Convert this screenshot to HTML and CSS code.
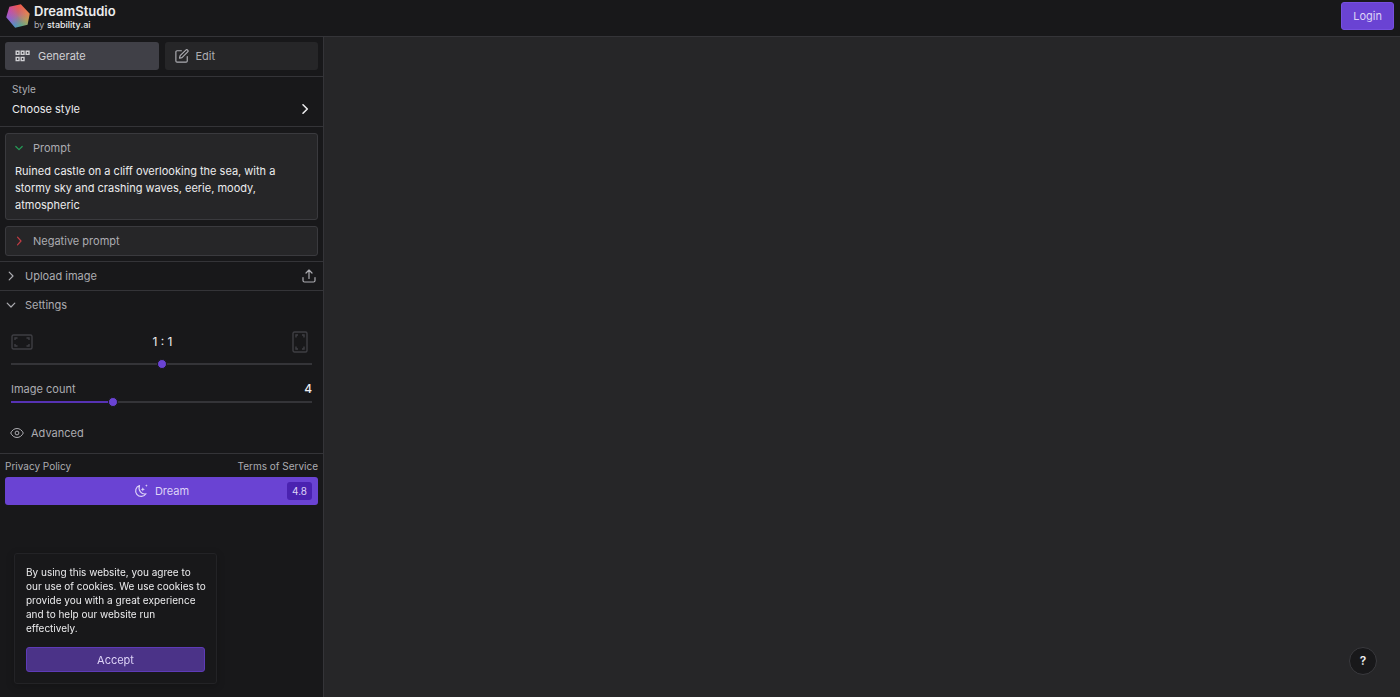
FILE: index.html
```html
<!DOCTYPE html>
<html lang="en">
	<head>
		<meta charset="utf-8">
		<meta name="viewport" content="width=device-width, initial-scale=1">
		<title>DreamStudio</title>
		<link rel="stylesheet" href="styles.css">
	</head>

	<body>
		<header class="topbar">
			<a class="brand" href="#">
				<span class="logo"></span>
				<span class="brand-text">
					<span class="brand-name">DreamStudio</span>
					<span class="brand-by">by <b>stability.ai</b></span>
				</span>
			</a>
			<button class="login" type="button">Login</button>
		</header>

		<div class="workspace">
			<aside class="sidebar">
				<nav class="tabs">
					<button class="tab active" type="button">
						<svg width="16" height="12" viewBox="0 0 16 12" fill="none" stroke="currentColor" stroke-width="1.4">
							<path d="M1.2 1.2h2.800v3.200H1.2zM6.2 1.2h2.800v3.200H6.2zM11.2 1.2h2.800v3.200h-2.800zM1.2 7.400h2.800v3.200H1.2zM6.2 7.400h2.800v3.200H6.2z"/>
						</svg>
						Generate
					</button>
					<button class="tab" type="button">
						<svg width="14" height="14" viewBox="0 0 24 24" fill="none" stroke="currentColor" stroke-width="2" stroke-linecap="round" stroke-linejoin="round">
							<path d="M11 3H3.5A2 2 0 0 0 1.500 5v15.500a2 2 0 0 0 2 2H19a2 2 0 0 0 2-2V13"/>
							<path d="M18.500 1.800a2.200 2.200 0 0 1 3.200 3.200L12 14.700l-4.300 1.100 1.100-4.300z"/>
						</svg>
						Edit
					</button>
				</nav>

				<button class="style-picker" type="button">
					<span class="style-label">Style</span>
					<span class="style-value">
						Choose style
						<svg width="12" height="12" viewBox="0 0 12 12" fill="none" stroke="currentColor" stroke-width="1.600" stroke-linecap="round" stroke-linejoin="round">
							<path d="M4 1.800 8.300 6 4 10.200"/>
						</svg>
					</span>
				</button>

				<section class="prompts">
					<div class="box">
						<label class="box-head" for="prompt">
							<svg class="green" width="10" height="10" viewBox="0 0 10 10" fill="none" stroke="currentColor" stroke-width="1.200" stroke-linecap="round" stroke-linejoin="round">
								<path d="M1.800 3.500 5 6.700l3.200-3.200"/>
							</svg>
							Prompt
						</label>
						<textarea id="prompt" rows="3" spellcheck="false">Ruined castle on a cliff overlooking the sea, with a stormy sky and crashing waves, eerie, moody, atmospheric</textarea>
					</div>
					<button class="box box-head negative" type="button">
						<svg class="red" width="10" height="10" viewBox="0 0 10 10" fill="none" stroke="currentColor" stroke-width="1.200" stroke-linecap="round" stroke-linejoin="round">
							<path d="M3.500 1.200 7 5 3.500 8.800"/>
						</svg>
						Negative prompt
					</button>
				</section>

				<div class="row">
					<button class="row-head" type="button">
						<svg width="10" height="10" viewBox="0 0 10 10" fill="none" stroke="currentColor" stroke-width="1.200" stroke-linecap="round" stroke-linejoin="round">
							<path d="M3.200 1.200 7 5 3.200 8.800"/>
						</svg>
						Upload image
					</button>
					<button type="button" aria-label="Upload">
						<svg width="14" height="14" viewBox="0 0 14 14" fill="none" stroke="currentColor" stroke-width="1.200" stroke-linecap="round" stroke-linejoin="round">
							<path d="M1 8.500v3a1.500 1.500 0 0 0 1.500 1.500h9a1.500 1.500 0 0 0 1.500-1.500v-3M7 9.500V1M4 4l3-3 3 3"/>
						</svg>
					</button>
				</div>

				<section class="settings">
					<button class="row-head" type="button">
						<svg width="10" height="10" viewBox="0 0 10 10" fill="none" stroke="currentColor" stroke-width="1.200" stroke-linecap="round" stroke-linejoin="round">
							<path d="M1.200 3.200 5 7l3.800-3.800"/>
						</svg>
						Settings
					</button>

					<div class="ratio">
						<div class="ratio-head">
							<svg width="22" height="16" viewBox="0 0 22 16" fill="none" stroke="currentColor" stroke-width="1.400">
								<rect x="1" y="1" width="20" height="14" rx="1.500"/>
								<path d="M4 6V4h2.500M15.500 4H18v2M18 10v2h-2.500M6.500 12H4v-2"/>
							</svg>
							<label for="ratio">1 : 1</label>
							<svg width="16" height="22" viewBox="0 0 16 22" fill="none" stroke="currentColor" stroke-width="1.400">
								<rect x="1" y="1" width="14" height="20" rx="1.500"/>
								<path d="M4 6.500V4h2M10 4h2v2.500M12 15.500V18h-2M6 18H4v-2.500"/>
							</svg>
						</div>
						<input id="ratio" type="range" min="0" max="10" value="5">
					</div>

					<div class="count">
						<div class="count-head">
							<label for="count">Image count</label>
							<output for="count">4</output>
						</div>
						<input id="count" class="filled" type="range" min="1" max="10" value="4">
					</div>

					<button class="advanced" type="button">
						<svg width="14" height="12" viewBox="0 0 14 12" fill="none" stroke="currentColor">
							<path d="M.7 6C2 3.300 4.200 1.500 7 1.500S12 3.300 13.300 6C12 8.700 9.800 10.500 7 10.500S2 8.700.7 6z"/>
							<circle cx="7" cy="6" r="1.900"/>
						</svg>
						Advanced
					</button>
				</section>

				<section class="submit">
					<div class="legal">
						<a href="#">Privacy Policy</a>
						<a href="#">Terms of Service</a>
					</div>
					<button class="dream" type="button">
						<span class="dream-label">
							<svg width="14" height="14" viewBox="0 0 14 14" fill="none" stroke="currentColor" stroke-width="1.200" stroke-linejoin="round">
								<path d="M5.500 1.500a5.600 5.600 0 1 0 6.500 8.300C7.500 11 3.800 6 5.500 1.500z"/>
								<path fill="currentColor" stroke="none" d="m8.800 3.200.6 1.500 1.500.6-1.500.6-.6 1.500-.6-1.500-1.500-.6 1.500-.6zM12.400.300l.4 1 1 .4-1 .4-.4 1-.4-1-1-.4 1-.4z"/>
							</svg>
							Dream
						</span>
						<span class="cost">4.8</span>
					</button>
				</section>
			</aside>

			<main class="canvas"></main>
		</div>

		<div class="cookies">
			<p>
				By using this website, you agree to<br>
				our use of cookies. We use cookies to<br>
				provide you with a great experience<br>
				and to help our website run<br>
				effectively.
			</p>
			<button type="button">Accept</button>
		</div>

		<button class="help" type="button">?</button>
	</body>
</html>
```
FILE: styles.css
```css
:root {
	--bg: #18181a;
	--panel: #262628;
	--line: #343438;
	--active: #404047;
	--text: #ececee;
	--muted: #acacb1;
	--purple: #6a43d3;
	--purple-dark: #4a22b0;
}

* {
	box-sizing: border-box;
}

body {
	margin: 0;
	min-height: 100vh;
	display: flex;
	flex-direction: column;
	background-color: var(--bg);
	color: var(--text);
	font-family: Inter, sans-serif;
	font-size: 11px;
	line-height: 16px;
}

button {
	display: flex;
	align-items: center;
	margin: 0;
	padding: 0;
	border: none;
	background: none;
	color: var(--muted);
	font: inherit;
	text-align: left;
	cursor: pointer;
}

svg {
	flex: none;
}

a {
	color: inherit;
	text-decoration: none;
}

/* header */
.topbar {
	display: flex;
	align-items: center;
	justify-content: space-between;
	height: 37px;
	padding: 0 6px 4px;
	border-bottom: 1px solid var(--line);
}

.brand {
	display: flex;
	align-items: center;
	gap: 4px;
}

.logo {
	width: 24px;
	height: 24px;
	background:
		radial-gradient(circle, rgba(176, 112, 138, 0.9), rgba(176, 112, 138, 0) 60%),
		conic-gradient(#f0564c, #e87f50 70deg, #b5a05a 115deg, #62a88a 160deg, #5590c4 200deg, #8b62d8 250deg, #c14fae 300deg, #f0564c);
	clip-path: polygon(14% 11%, 62% 1%, 99% 41%, 90% 86%, 38% 99%, 1% 55%);
}

.brand-text {
	display: flex;
	flex-direction: column;
	padding-top: 2px;
}

.brand-name {
	font-size: 13px;
	font-weight: 600;
	line-height: 15px;
}

.brand-by {
	color: var(--muted);
	font-size: 9px;
	line-height: 12px;
}

.brand-by b {
	color: var(--text);
	font-weight: 500;
}

.login {
	height: 28px;
	padding: 0 11px;
	border: 1px solid #7650de;
	border-radius: 3px;
	background-color: var(--purple);
	color: #ddd3f7;
}

/* layout */
.workspace {
	flex: 1;
	display: flex;
}

.sidebar {
	flex: none;
	width: 324px;
	border-right: 1px solid var(--line);
}

.canvas {
	flex: 1;
	background-color: var(--panel);
}

.tabs {
	display: flex;
	gap: 6px;
	padding: 5px 5px 6px;
	border-bottom: 1px solid var(--line);
}

.tab {
	flex: 1;
	gap: 7px;
	height: 28px;
	padding: 0 10px;
	border-radius: 3px;
	background-color: var(--panel);
}

.tab.active {
	background-color: var(--active);
	color: #d0d0d4;
}

.style-picker {
	flex-direction: column;
	align-items: stretch;
	gap: 5px;
	width: 100%;
	height: 50px;
	padding: 5px 12px 0;
	border-bottom: 1px solid var(--line);
	color: var(--text);
}

.style-label {
	color: var(--muted);
	font-size: 10px;
	line-height: 14px;
}

.style-value {
	display: flex;
	align-items: center;
	justify-content: space-between;
}

.prompts {
	display: flex;
	flex-direction: column;
	gap: 6px;
	padding: 6px 5px 5px;
	border-bottom: 1px solid var(--line);
}

.box {
	border: 1px solid #3a3a3e;
	border-radius: 3px;
	background-color: var(--panel);
}

.box-head {
	display: flex;
	align-items: center;
	gap: 9px;
	height: 28px;
	padding: 0 8px;
	color: var(--muted);
}

.box textarea {
	display: block;
	width: 100%;
	padding: 1px 24px 5px 9px;
	border: none;
	outline: none;
	resize: none;
	background: none;
	color: var(--text);
	font: inherit;
	line-height: 17px;
	overflow: hidden;
}

.negative {
	height: 30px;
}

.green {
	color: #259c58;
}

.red {
	color: #c03c44;
}

.row {
	display: flex;
	align-items: center;
	justify-content: space-between;
	padding-right: 7px;
	border-bottom: 1px solid var(--line);
}

.row-head {
	gap: 9px;
	height: 28px;
	padding-left: 6px;
}

/* settings */
.settings {
	border-bottom: 1px solid var(--line);
}

.ratio {
	padding: 12px 11px 0;
}

.ratio-head {
	display: flex;
	align-items: center;
	justify-content: space-between;
	height: 22px;
	padding-right: 4px;
	color: #3e3e43;
}

.ratio-head label {
	color: var(--text);
	font-size: 12px;
}

.count {
	padding: 12px 11px 0;
}

.count-head {
	display: flex;
	justify-content: space-between;
	color: var(--muted);
}

.count-head output {
	color: var(--text);
	font-size: 12px;
	font-weight: 500;
}

input[type="range"] {
	display: block;
	appearance: none;
	width: 100%;
	height: 10px;
	margin: 0;
	background: linear-gradient(var(--line), var(--line)) center / 100% 2px no-repeat;
}

.ratio input {
	margin-top: 6px;
}

input[type="range"].filled {
	background: linear-gradient(90deg, #5632b4 34%, var(--line) 34%) center / 100% 2px no-repeat;
}

input[type="range"]::-webkit-slider-thumb {
	appearance: none;
	width: 10px;
	height: 10px;
	border: 1px solid var(--bg);
	border-radius: 50%;
	background-color: var(--purple);
}

.advanced {
	gap: 7px;
	height: 28px;
	margin: 12px 0 6px;
	padding-left: 10px;
}

/* footer of the sidebar */
.submit {
	padding: 4px 5px;
}

.legal {
	display: flex;
	justify-content: space-between;
	color: var(--muted);
	font-size: 10px;
	line-height: 16px;
}

.dream {
	display: grid;
	grid-template-columns: 1fr auto 1fr;
	width: 100%;
	height: 28px;
	margin-top: 3px;
	padding: 0 6px;
	border-radius: 3px;
	background-color: var(--purple);
	color: #ddd3f7;
}

.dream-label {
	grid-column: 2;
	display: flex;
	align-items: center;
	gap: 7px;
}

.cost {
	justify-self: end;
	padding: 1px 5px;
	border-radius: 3px;
	background-color: var(--purple-dark);
	font-size: 10px;
}

/* floating parts */
.cookies {
	position: fixed;
	left: 14px;
	bottom: 13px;
	width: 203px;
	padding: 11px;
	border: 1px solid #232326;
	border-radius: 3px;
	background-color: var(--bg);
	box-shadow: 0 2px 8px rgba(0, 0, 0, 0.2);
}

.cookies p {
	margin: 0 0 12px;
	font-size: 10px;
	line-height: 14px;
	white-space: nowrap;
}

.cookies button {
	justify-content: center;
	width: 100%;
	height: 25px;
	border: 1px solid #5e3bb8;
	border-radius: 3px;
	background-color: #4b3388;
	color: #ddd3f7;
}

.help {
	position: fixed;
	right: 23px;
	bottom: 22px;
	justify-content: center;
	width: 28px;
	height: 28px;
	border: 1px solid #3a3a3e;
	border-radius: 50%;
	background-color: var(--bg);
	color: var(--text);
	font-size: 12px;
	font-weight: 600;
}
```
